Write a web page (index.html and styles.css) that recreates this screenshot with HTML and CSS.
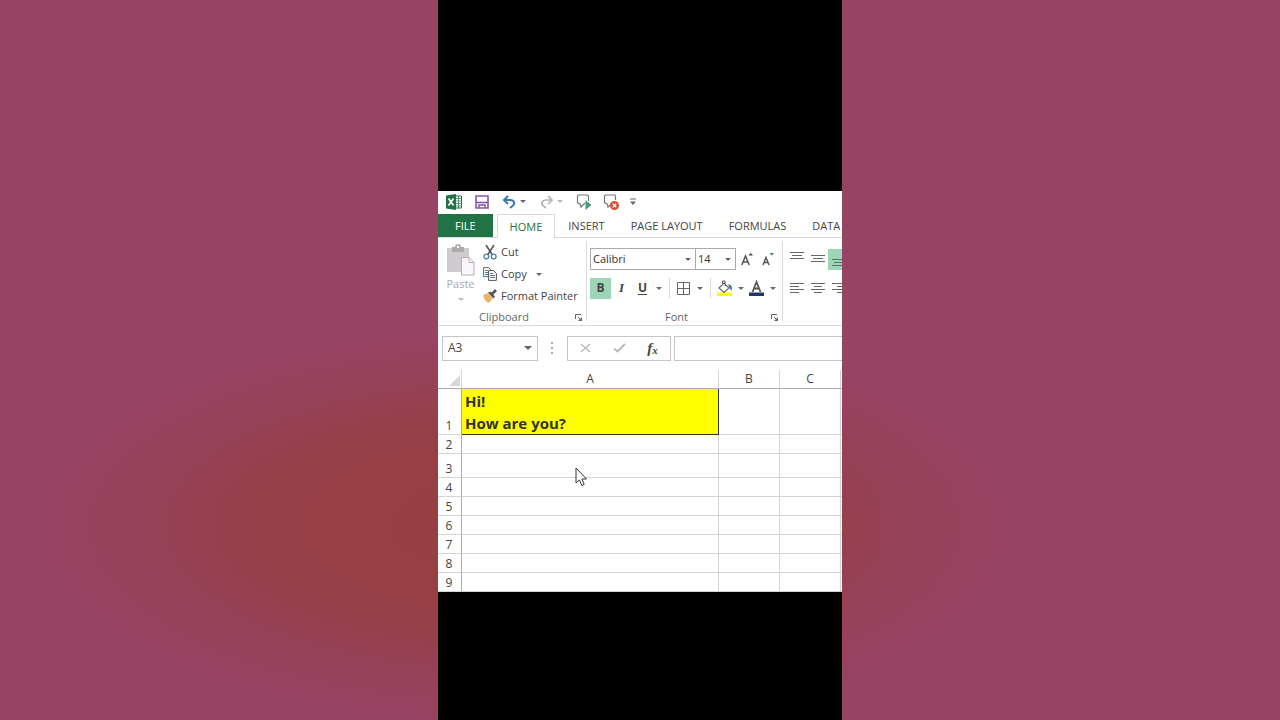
FILE: index.html
```html
<!DOCTYPE html>
<html lang="en">
<head>
<meta charset="utf-8">
<meta name="viewport" content="width=device-width, initial-scale=1">
<title>Spreadsheet</title>
<link rel="stylesheet" href="styles.css">
</head>
<body>
<main class="stage">
<div class="app">
  <div class="quick">
    <svg class="logo" width="16" height="16" viewBox="0 0 16 16"><path d="M9 2h6.500v12H9z" fill="#fff" stroke="#217346"/><path d="M10 4.500h5M10 7h5M10 9.500h5M10 12h5M12.500 2v12" stroke="#217346" stroke-width=".7"/><path d="M0 1.500 10 0v16L0 14.500z" fill="#217346"/><path d="m2.500 4.500 5 7M7.500 4.500l-5 7" stroke="#fff" stroke-width="1.700"/></svg>
    <button class="tool save" aria-label="Save"><svg width="14" height="14" viewBox="0 0 14 14"><path d="M1 1h12v12H1z" fill="#fff" stroke="#8a55a8" stroke-width="1.600"/><path d="M1 7.500h12" stroke="#8a55a8" stroke-width="1.600"/><path d="M4 13v-3h6v3" fill="none" stroke="#8a55a8" stroke-width="1.500"/></svg></button>
    <button class="tool" aria-label="Undo"><svg width="15" height="14" viewBox="0 0 15 14"><path d="M6 1 2 5l4 4M2 5h6c4.500 0 5.500 4 2.500 6L8 13" fill="none" stroke="#3b76ae" stroke-width="2"/></svg><i class="caret"></i></button>
    <button class="tool redo" aria-label="Redo"><svg width="15" height="14" viewBox="0 0 15 14"><path d="m9 1 4 4-4 4M13 5H7c-4.500 0-5.500 4-2.500 6L7 13" fill="none" stroke="#b5b5b5" stroke-width="1.700"/></svg><i class="caret pale"></i></button>
    <button class="tool macro" aria-label="Run macro"><svg width="16" height="16" viewBox="0 0 16 16"><path d="M4 9.500H2.500l-1-1V2l1-1h9l1 1v5M4 9.500l1 3.500 4-4" fill="none" stroke="#777" stroke-width="1.200"/><path d="m9.500 6 6 5-6 5z" fill="#4a9c78"/></svg></button>
    <button class="tool macro" aria-label="Stop macro"><svg width="16" height="16" viewBox="0 0 16 16"><path d="M4 9.500H2.500l-1-1V2l1-1h9l1 1v4M4 9.500l1 3.500 2-2" fill="none" stroke="#777" stroke-width="1.200"/><circle cx="11.500" cy="11.500" r="4.500" fill="#d8502f"/><path d="m9.800 9.800 3.400 3.400m0-3.400-3.400 3.400" stroke="#fff" stroke-width="1.300"/></svg></button>
    <button class="tool" aria-label="Customize toolbar"><svg width="6" height="7" viewBox="0 0 6 7"><path d="M0 1h6" stroke="#666"/><path d="M0 3.500h6L3 7z" fill="#666"/></svg></button>
  </div>

  <nav class="tabs">
    <button class="tab file">FILE</button>
    <button class="tab active">HOME</button>
    <button class="tab">INSERT</button>
    <button class="tab">PAGE LAYOUT</button>
    <button class="tab">FORMULAS</button>
    <button class="tab last">DATA</button>
  </nav>

  <div class="ribbon">
    <section class="group clipboard">
      <div class="body">
        <button class="paste">
          <svg width="29" height="32" viewBox="0 0 29 32"><path d="M1 4h22v24H1z" fill="#cfcbcf"/><path d="M6 4V3h3c0-4 6-4 6 0h3v5H6z" fill="#aaa"/><circle cx="12" cy="3" r="1.200" fill="#fff"/><path d="M15.500 13.500H23l5 5V31H15.500z" fill="#fbf6fb" stroke="#b5aeb5"/><path d="M23 13.500v5h5" fill="none" stroke="#b5aeb5"/></svg>
          <span>Paste</span><i class="caret pale"></i>
        </button>
        <div class="actions">
          <button class="action"><svg width="14" height="15" viewBox="0 0 14 15"><path d="m3 0 6.500 10M11 0 4.500 10" stroke="#555" stroke-width="1.600"/><circle cx="3.300" cy="11.500" r="2.400" fill="#fff" stroke="#477fa6" stroke-width="1.300"/><circle cx="10.700" cy="11.500" r="2.400" fill="#fff" stroke="#477fa6" stroke-width="1.300"/></svg>Cut</button>
          <button class="action"><svg width="14" height="14" viewBox="0 0 14 14"><path d="M.6.600h5l2 2v7h-7z" fill="#fff" stroke="#666"/><path d="M2 3.500h3M2 5.500h4M2 7.500h4" stroke="#477fa6"/><path d="M5.600 3.600h5l2.800 2.800v7H5.600z" fill="#fff" stroke="#555"/><path d="M7 6.500h3M7 8.500h5M7 10.500h5" stroke="#477fa6"/></svg>Copy<i class="caret"></i></button>
          <button class="action"><svg width="14" height="14" viewBox="0 0 14 14"><path d="m0 6 5-2 5 5-4 5c-3-1-5-4-6-8z" fill="#e5b76d"/><path d="m5 3.500 2.500-1 4.500 5-1.500 2z" fill="#555"/><path d="m9 5 4-4" stroke="#555" stroke-width="2.600"/></svg>Format Painter</button>
        </div>
      </div>
      <footer class="caption"><span>Clipboard</span><button class="launch" aria-label="Clipboard options"><svg width="7" height="7" viewBox="0 0 7 7"><path d="M.5 5V.5H6M3 3l3 3" fill="none" stroke="#666"/><path d="M7 3v4H3z" fill="#666"/></svg></button></footer>
    </section>

    <section class="group font">
      <div class="body rows">
        <div class="row">
          <span class="pick family"><select aria-label="Font"><option>Calibri</option></select><i class="caret"></i></span>
          <span class="pick size"><select aria-label="Font size"><option>14</option></select><i class="caret"></i></span>
          <button class="key" aria-label="Increase font size"><svg width="12" height="14" viewBox="0 0 12 14"><path d="M.8 13 4.500 4l3.700 9M2 10h5" fill="none" stroke="#555" stroke-width="1.500"/><path d="M7.500 3.500h4.500L9.800 1z" fill="#444"/></svg></button>
          <button class="key" aria-label="Decrease font size"><svg width="12" height="14" viewBox="0 0 12 14"><path d="M1 13l3-7.500L7 13M2 10.500h4" fill="none" stroke="#555" stroke-width="1.400"/><path d="M7.500 1H12L9.800 3.500z" fill="#3b76ae"/></svg></button>
        </div>
        <div class="row">
          <button class="key on bold">B</button>
          <button class="key italic">I</button>
          <button class="key under">U</button>
          <button class="drop" aria-label="Underline styles"><i class="caret"></i></button>
          <i class="rule"></i>
          <button class="key" aria-label="Borders"><svg width="13" height="13" viewBox="0 0 13 13"><path d="M.5.500h12v12H.5zM6.500.500v12M.5 6.500h12" fill="none" stroke="#666"/></svg></button>
          <button class="drop" aria-label="Border styles"><i class="caret"></i></button>
          <i class="rule"></i>
          <button class="key" aria-label="Fill color"><svg width="16" height="16" viewBox="0 0 16 16"><path d="M0 12.500h15V16H0z" fill="#ff0"/><path d="m2 8 5-5 5 5-5 4.500zM5.500 5V1.500q1.500-1.500 2.500 0V6" fill="#fff" stroke="#666" stroke-width="1.100"/><path d="M11 4.500c4 0 4.500 2.500 3.500 6.500l-2-3z" fill="#477f96"/></svg></button>
          <button class="drop" aria-label="Fill colors"><i class="caret"></i></button>
          <button class="key" aria-label="Font color"><svg width="16" height="16" viewBox="0 0 16 16"><path d="M0 12.500h15V16H0z" fill="#1f3864"/><path d="m3.500 12 4-10 4 10M5 8.500h5" fill="none" stroke="#555" stroke-width="1.800"/></svg></button>
          <button class="drop" aria-label="Font colors"><i class="caret"></i></button>
        </div>
      </div>
      <footer class="caption"><span>Font</span><button class="launch" aria-label="Font options"><svg width="7" height="7" viewBox="0 0 7 7"><path d="M.5 5V.5H6M3 3l3 3" fill="none" stroke="#666"/><path d="M7 3v4H3z" fill="#666"/></svg></button></footer>
    </section>

    <section class="group align">
      <div class="body rows">
        <div class="row">
          <button class="key" aria-label="Top align"><svg width="14" height="16" viewBox="0 0 14 16"><path d="M0 1.500h14M2 4.500h10M0 7.500h14" stroke="#666"/></svg></button>
          <button class="key" aria-label="Middle align"><svg width="14" height="16" viewBox="0 0 14 16"><path d="M0 4.500h14M2 7.500h10M0 10.500h14" stroke="#666"/></svg></button>
          <button class="key on" aria-label="Bottom align"><svg width="14" height="16" viewBox="0 0 14 16"><path d="M0 8.500h14M2 11.500h10M0 14.500h14" stroke="#4d7863"/></svg></button>
        </div>
        <div class="row">
          <button class="key" aria-label="Align left"><svg width="14" height="12" viewBox="0 0 14 12"><path d="M0 1.500h14M0 4.500h9M0 7.500h14M0 10.500h9" stroke="#666"/></svg></button>
          <button class="key" aria-label="Center"><svg width="14" height="12" viewBox="0 0 14 12"><path d="M0 1.500h14M3 4.500h8M0 7.500h14M3 10.500h8" stroke="#666"/></svg></button>
          <button class="key" aria-label="Align right"><svg width="14" height="12" viewBox="0 0 14 12"><path d="M0 1.500h14M5 4.500h9M0 7.500h14M5 10.500h9" stroke="#666"/></svg></button>
        </div>
      </div>
    </section>
  </div>

  <div class="formula">
    <label class="namebox"><input type="text" value="A3" aria-label="Name box"><i class="caret big"></i></label>
    <svg class="dots" width="2" height="12" viewBox="0 0 2 12"><path d="M0 0h2v2H0zM0 5h2v2H0zM0 10h2v2H0z" fill="#aaa"/></svg>
    <div class="entry">
      <button class="key" aria-label="Cancel"><svg width="11" height="10" viewBox="0 0 11 10"><path d="m1 1 9 8m0-8L1 9" stroke="#b8b8b8" stroke-width="1.400"/></svg></button>
      <button class="key" aria-label="Enter"><svg width="13" height="10" viewBox="0 0 13 10"><path d="m1 5.500 3.500 3L12 1" fill="none" stroke="#b8b8b8" stroke-width="1.900"/></svg></button>
      <button class="key fx" aria-label="Insert function">f<small>x</small></button>
    </div>
    <input class="bar" type="text" aria-label="Formula bar">
  </div>

  <div class="sheet">
    <table>
      <colgroup><col class="c-num"><col><col class="c-std"><col class="c-std"><col class="c-rest"></colgroup>
      <thead><tr><th class="corner" aria-label="Select all"><svg width="11" height="11" viewBox="0 0 11 11"><path d="M11 0v11H0z" fill="#d8d8d8"/></svg></th><th>A</th><th>B</th><th>C</th><th></th></tr></thead>
      <tbody>
        <tr class="first"><th>1</th><td class="filled">Hi!<br>How are you?</td><td></td><td></td><td></td></tr>
        <tr><th>2</th><td></td><td></td><td></td><td></td></tr>
        <tr class="tall"><th>3</th><td></td><td></td><td></td><td></td></tr>
        <tr><th>4</th><td></td><td></td><td></td><td></td></tr>
        <tr><th>5</th><td></td><td></td><td></td><td></td></tr>
        <tr><th>6</th><td></td><td></td><td></td><td></td></tr>
        <tr><th>7</th><td></td><td></td><td></td><td></td></tr>
        <tr><th>8</th><td></td><td></td><td></td><td></td></tr>
        <tr><th>9</th><td></td><td></td><td></td><td></td></tr>
      </tbody>
    </table>
    <svg class="pointer" width="12" height="20" viewBox="0 0 12 20"><path d="M1 1v15l3.500-3 2.300 5.500 2.400-1L7 12h4.500z" fill="#fff" stroke="#333"/></svg>
  </div>
</div>
</main>
</body>
</html>
```
FILE: styles.css
```css
* { box-sizing: border-box; }
body {
  margin: 0;
  min-height: 100vh;
  display: grid;
  grid-template-columns: 438fr 404fr 438fr;
  background:
    radial-gradient(ellipse 39% 28% at 41% 73%, #963f40 0%, rgba(150, 63, 66, 0.85) 50%, rgba(150, 63, 72, 0.35) 80%, rgba(150, 64, 80, 0) 100%),
    #974364;
  font: 12px/16px "Open Sans", "Noto Sans", sans-serif;
  color: #444;
}
button, input, select {
  font: inherit;
  color: inherit;
  border: 0;
  padding: 0;
  margin: 0;
  background: none;
  border-radius: 0;
}
button { display: flex; align-items: center; justify-content: center; white-space: nowrap; flex: none; }
svg { display: block; flex: none; }
.stage {
  grid-column: 2;
  min-width: 0;
  background: #000;
  display: grid;
  grid-template-columns: minmax(0, 1fr);
  grid-template-rows: 191fr auto 128fr;
}
.app { grid-row: 2; background: #fff; overflow: hidden; }

.caret {
  flex: none;
  width: 0;
  border: 3px solid transparent;
  border-top-color: #666;
  border-bottom: 0;
}
.caret.pale { border-top-color: #bbb; }
.caret.big { border-width: 4px 4px 0; }

.quick { display: flex; align-items: center; height: 23px; padding: 0 8px 2px; gap: 13px; }
.quick .tool { gap: 3px; }
.quick .macro { margin-right: -2px; }

.tabs { display: flex; height: 24px; border-bottom: 1px solid #d8d8d8; font-size: 11px; }
.tab { padding: 1px 13px 0; }
.tab.file { padding: 1px 17px 0; background: #217346; color: #fff; margin-right: 4px; }
.tab.active {
  color: #217346;
  background: #fff;
  border: 1px solid #d8d8d8;
  border-bottom: 0;
  padding: 0 12px;
  margin-bottom: -1px;
}
.tab.last { padding-right: 0; }

.ribbon { display: flex; height: 88px; border-bottom: 1px solid #d8d8d8; font-size: 11px; }
.group { flex: none; display: flex; flex-direction: column; position: relative; }
.group::after { content: ""; position: absolute; right: 0; top: 3px; bottom: 4px; width: 1px; background: #dcdcdc; }
.clipboard { width: 149px; }
.font { width: 196px; }
.body { display: flex; height: 71px; }
.rows { flex-direction: column; padding: 10px 0 0 3px; gap: 7px; }
.row { display: flex; height: 22px; align-items: center; }
.caption { display: flex; align-items: center; padding-right: 5px; color: #666; }
.caption span { flex: 1; text-align: center; padding-right: 5px; }
.paste { flex-direction: column; justify-content: flex-start; width: 45px; padding-top: 6px; color: #aaa; }
.paste .caret { margin-top: 6px; }
.actions { display: flex; flex-direction: column; padding-top: 3px; }
.action { height: 22px; justify-content: flex-start; gap: 4px; }
.action .caret { margin-left: 5px; }

.pick { display: flex; align-items: center; position: relative; height: 22px; border: 1px solid #ababab; }
.pick select { appearance: none; width: 100%; height: 100%; padding: 0 2px; color: #333; }
.pick .caret { position: absolute; right: 4px; pointer-events: none; }
.family { width: 106px; }
.size { width: 40px; border-left: 0; }
.key { width: 21px; height: 21px; }
.on { background: #9fd5b7; }
.bold { font-weight: 700; font-size: 12px; }
.italic { font: italic 700 13px/16px "Liberation Serif", serif; }
.under { font-weight: 700; font-size: 12px; text-decoration: underline; text-underline-offset: 2px; }
.drop { width: 11px; height: 21px; }
.rule { width: 1px; height: 20px; margin: 0 3px 0 5px; background: #dcdcdc; }
.align { width: 80px; }

.formula { display: flex; align-items: center; height: 44px; padding-left: 4px; }
.namebox { display: flex; align-items: center; width: 96px; height: 25px; border: 1px solid #c6c6c6; padding: 0 5px; }
.namebox input { flex: 1; min-width: 0; }
.dots { margin: 0 14px 0 13px; }
.entry { display: flex; align-items: center; justify-content: space-between; width: 104px; height: 25px; padding: 0 7px; border: 1px solid #c6c6c6; }
.fx { font: italic 700 15px/16px "Liberation Serif", serif; }
.fx small { font-size: 11px; padding-top: 3px; }
.bar { flex: 1; min-width: 0; height: 25px; margin-left: 3px; border: 1px solid #c6c6c6; border-right: 0; }

.sheet { position: relative; }
table { width: 100%; table-layout: fixed; border-collapse: separate; border-spacing: 0; }
.c-num { width: 24px; }
.c-std { width: 61px; }
.c-rest { width: 1px; }
th, td { padding: 0; height: 19px; font-weight: 400; border: solid #d4d4d4; border-width: 0 1px 1px 0; }
th:last-child, td:last-child { border-right: 0; }
thead th { height: 19px; border-bottom-color: #ababab; line-height: 14px; vertical-align: top; padding-top: 2px; }
.corner svg { margin: 3px 1px 0 auto; }
tbody th { vertical-align: bottom; line-height: 17px; padding-right: 1px; border-right-color: #ababab; }
.first td, .first th { height: 46px; }
.tall td, .tall th { height: 24px; }
td.filled {
  height: 46px;
  background: #ff0;
  border-color: #333300;
  padding: 0 0 0 3px;
  font-weight: 700;
  font-size: 15px;
  line-height: 22px;
  color: #333;
}
.pointer { position: absolute; left: 34%; top: 97px; }
```
